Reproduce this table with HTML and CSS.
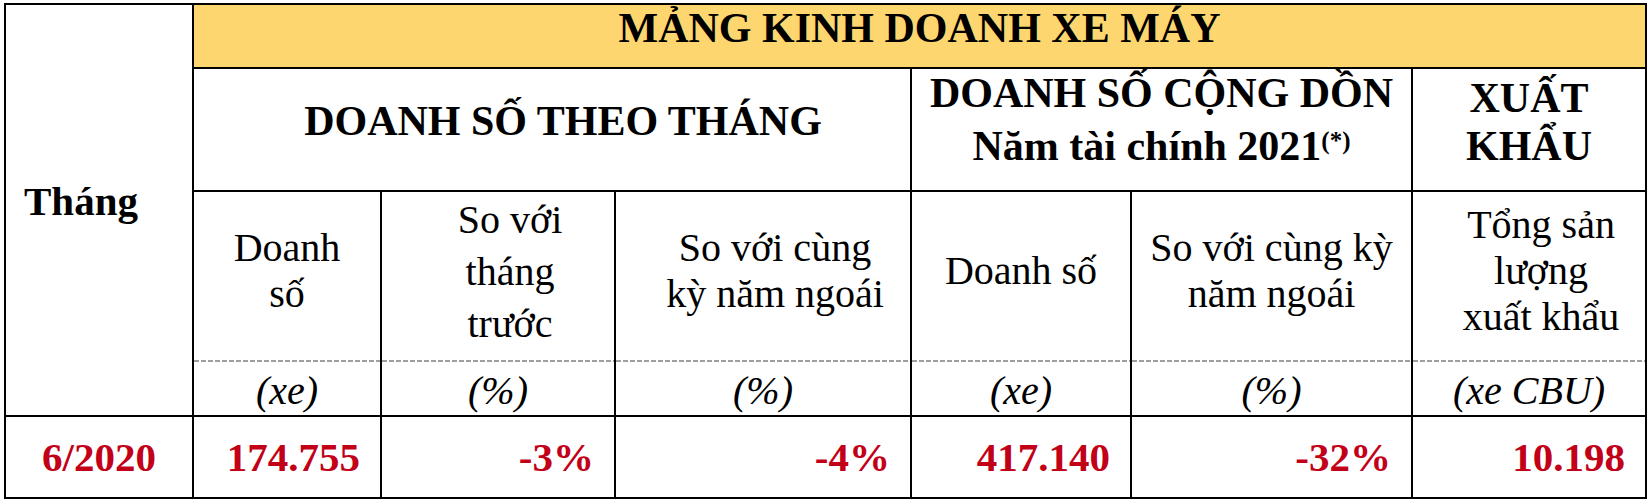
FILE: index.html
```html
<!DOCTYPE html>
<html lang="vi">
<head>
<meta charset="utf-8">
<title>Mảng kinh doanh xe máy</title>
<link rel="stylesheet" href="styles.css">
</head>
<body>
<table class="sales">
  <colgroup>
    <col class="c1"><col class="c2"><col class="c3"><col class="c4"><col class="c5"><col class="c6"><col class="c7">
  </colgroup>
  <tr class="r-title">
    <th class="month" rowspan="4">Tháng</th>
    <th class="title" colspan="6">MẢNG KINH DOANH XE MÁY</th>
  </tr>
  <tr class="r-group">
    <th class="grp grp-month" colspan="3">DOANH SỐ THEO THÁNG</th>
    <th class="grp grp-cum" colspan="2"><div class="cum-in">DOANH SỐ CỘNG DỒN<br>Năm tài chính 2021<sup class="note">(*)</sup></div></th>
    <th class="grp grp-exp">XUẤT<br>KHẨU</th>
  </tr>
  <tr class="r-sub">
    <td>Doanh<br>số</td>
    <td class="shift three">So với<br>tháng<br>trước</td>
    <td class="shift">So với cùng<br>kỳ năm ngoái</td>
    <td>Doanh số</td>
    <td>So với cùng kỳ<br>năm ngoái</td>
    <td class="shift">Tổng sản<br>lượng<br>xuất khẩu</td>
  </tr>
  <tr class="r-unit">
    <td>(xe)</td>
    <td>(%)</td>
    <td>(%)</td>
    <td>(xe)</td>
    <td>(%)</td>
    <td>(xe CBU)</td>
  </tr>
  <tr class="r-data">
    <td class="center">6/2020</td>
    <td>174.755</td>
    <td>-3%</td>
    <td>-4%</td>
    <td>417.140</td>
    <td>-32%</td>
    <td>10.198</td>
  </tr>
</table>
</body>
</html>
```

FILE: styles.css
```css
html, body {
  margin: 0;
  background: #ffffff;
}

.sales {
  border-collapse: collapse;
  table-layout: fixed;
  width: 1643px;
  margin: 3px 0 0 4px;
  font-family: "Liberation Serif", "Times New Roman", serif;
  color: #000000;
}

.c1 { width: 188px; }
.c2 { width: 188px; }
.c3 { width: 234px; }
.c4 { width: 296px; }
.c5 { width: 220px; }
.c6 { width: 281px; }
.c7 { width: 234px; }

.sales th,
.sales td {
  border: 2px solid #000000;
  padding: 0;
  text-align: center;
  vertical-align: middle;
  white-space: nowrap;
}

.sales th {
  font-size: 42px;
  font-weight: 700;
}

.sales td {
  font-size: 40px;
  font-weight: 400;
}

/* row 1 */
.r-title { height: 64px; }

.sales .title {
  background: #fed66f;
  line-height: 44px;
  padding-bottom: 16px;
}

.sales .month {
  font-size: 41px;
  line-height: 47px;
  padding-right: 36px;
  padding-bottom: 18px;
}

/* row 2 */
.r-group { height: 123px; }

.sales .grp-month {
  line-height: 47px;
  padding-left: 22px;
  padding-bottom: 17px;
}

.cum-in {
  line-height: 53px;
  margin-top: -20px;
}

.note {
  font-size: 25px;
  vertical-align: 11px;
  line-height: 0;
}

.sales .grp-exp {
  line-height: 48px;
  padding-bottom: 15px;
}

/* row 3 */
.r-sub { height: 169px; }

.sales .r-sub td {
  line-height: 46px;
  padding-bottom: 10px;
  border-bottom: 0 none;
}

.sales .r-sub td.three {
  line-height: 52px;
  padding-bottom: 8px;
}

.sales .r-sub td.shift {
  padding-left: 24px;
}

/* row 4 */
.r-unit { height: 56px; }

.sales .r-unit td {
  font-style: italic;
  line-height: 46px;
  padding-top: 6px;
  border-top: 0 none;
  background-image: repeating-linear-gradient(90deg, #9d9d9d 0 5px, transparent 5px 7px);
  background-size: 100% 2px;
  background-repeat: no-repeat;
  background-position: left top;
}

/* row 5 */
.r-data { height: 82px; }

.sales .r-data td {
  color: #c20018;
  font-size: 41px;
  font-weight: 700;
  line-height: 46px;
  text-align: right;
  padding-right: 20px;
}

.sales .r-data td.center {
  text-align: center;
  padding-right: 0;
}
```
